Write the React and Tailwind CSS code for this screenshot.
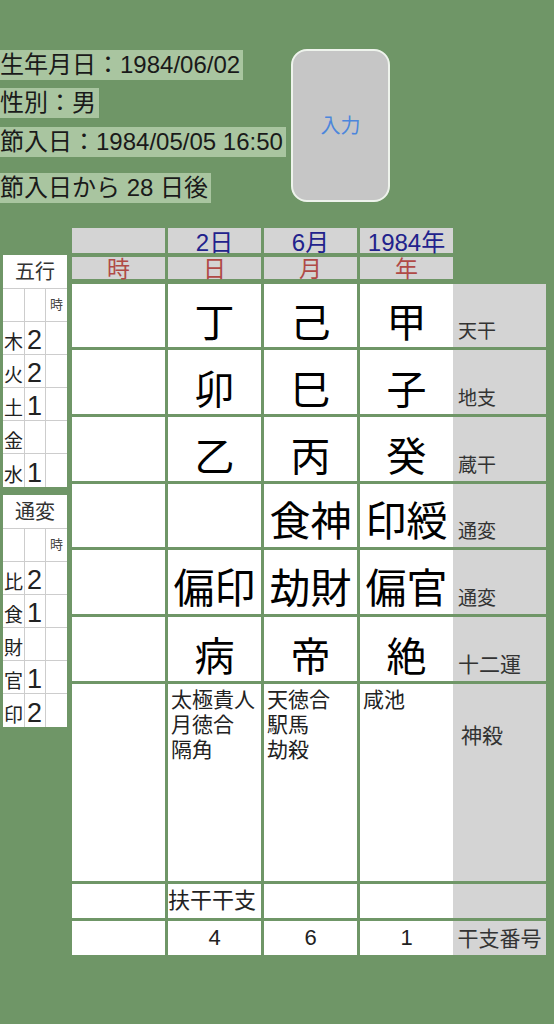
import React from 'react';

const FONT = { fontFamily: '"Liberation Sans", "Noto Sans CJK JP", sans-serif' };

const gogyo = [
  ['木', '2'],
  ['火', '2'],
  ['土', '1'],
  ['金', ''],
  ['水', '1'],
];

const tsuhen = [
  ['比', '2'],
  ['食', '1'],
  ['財', ''],
  ['官', '1'],
  ['印', '2'],
];

const mainRows = [
  { cells: ['丁', '己', '甲'], label: '天干', h: 'h-[63px]', size: 'text-[40px]', labelSize: 'text-[19px]' },
  { cells: ['卯', '巳', '子'], label: '地支', h: 'h-[64px]', size: 'text-[40px]', labelSize: 'text-[19px]' },
  { cells: ['乙', '丙', '癸'], label: '蔵干', h: 'h-[64px]', size: 'text-[40px]', labelSize: 'text-[19px]' },
  { cells: ['', '食神', '印綬'], label: '通変', h: 'h-[63px]', size: 'text-[41px]', labelSize: 'text-[19px]' },
  { cells: ['偏印', '劫財', '偏官'], label: '通変', h: 'h-[64px]', size: 'text-[41px]', labelSize: 'text-[19px]' },
  { cells: ['病', '帝', '絶'], label: '十二運', h: 'h-[64px]', size: 'text-[40px]', labelSize: 'text-[21px]' },
];

const CountBox = ({ title, items }) => {
  return (
    <div className="bg-white w-[64px] text-[#222]">
      <div className="h-[34px] flex items-center justify-center text-[20px] text-[#333] border-b border-[#cdcdcd]">
        {title}
      </div>
      <div className="flex h-[33px] border-b border-[#cdcdcd]">
        <div className="w-[22px] border-r border-[#cdcdcd]"></div>
        <div className="w-[21px] border-r border-[#cdcdcd]"></div>
        <div className="flex-1 flex items-center justify-center text-[13px] text-[#444]">時</div>
      </div>
      {items.map(([k, n], i) => (
        <div
          key={k}
          className={i < items.length - 1 ? 'flex h-[33px] border-b border-[#cdcdcd]' : 'flex h-[33px]'}
        >
          <div className="w-[22px] border-r border-[#cdcdcd] flex items-end justify-center pb-[2px] text-[19px] leading-none">
            {k}
          </div>
          <div className="w-[21px] border-r border-[#cdcdcd] flex items-end justify-start pl-[2px] text-[27px] leading-none">
            {n}
          </div>
          <div className="flex-1"></div>
        </div>
      ))}
    </div>
  );
};

const App = () => {
  return (
    <div className="w-full h-[1024px] bg-[#6f9667] overflow-hidden text-black" style={FONT}>
      {/* Top info */}
      <div className="flex pt-[49px]">
        <div className="w-[291px] pt-[1px] flex flex-col items-start text-[24px] text-[#1a1a1a]">
          <div className="h-[30px] leading-[30px] bg-[#a9c5a0] pr-[3px] whitespace-nowrap">生年月日：1984/06/02</div>
          <div className="h-[30px] leading-[30px] bg-[#a9c5a0] pr-[3px] mt-[8px] whitespace-nowrap">性別：男</div>
          <div className="h-[30px] leading-[30px] bg-[#a9c5a0] pr-[3px] mt-[9px] whitespace-nowrap">節入日：1984/05/05 16:50</div>
          <div className="h-[30px] leading-[30px] bg-[#a9c5a0] pr-[3px] mt-[16px] whitespace-nowrap">節入日から 28 日後</div>
        </div>
        <button className="w-[99px] h-[153px] rounded-[16px] bg-[#c6c6c6] border-2 border-[#eef3ec] flex items-center justify-center text-[20px] text-[#4c86dc]">
          入力
        </button>
      </div>

      {/* Chart */}
      <div className="flex mt-[25px]">
        {/* Left counters */}
        <div className="ml-[3px] mt-[27px] flex flex-col gap-[8px]">
          <CountBox title="五行" items={gogyo} />
          <CountBox title="通変" items={tsuhen} />
        </div>

        {/* Main table */}
        <div className="ml-[5px] w-[474px]">
          <div className="grid grid-cols-[93px_93px_93px_93px] gap-[3px]">
            <div className="h-[25px] bg-[#d4d4d4]"></div>
            {['2日', '6月', '1984年'].map((t) => (
              <div key={t} className="h-[25px] bg-[#d4d4d4] flex items-end justify-center text-[24px] leading-none text-[#22228c]">
                <span className="mb-[-2px]">{t}</span>
              </div>
            ))}
            {['時', '日', '月', '年'].map((t) => (
              <div key={t} className="h-[22px] mt-[1px] bg-[#d4d4d4] flex items-end justify-center text-[23px] leading-none text-[#b04a46]">
                <span className="mb-[-2px]">{t}</span>
              </div>
            ))}
          </div>

          <div className="mt-[5px] grid grid-cols-[93px_93px_93px_186px] gap-[3px]">
            {mainRows.map((row, ri) => (
              <React.Fragment key={ri}>
                <div className={`${row.h} bg-white`}></div>
                {row.cells.slice(0, 2).map((c, ci) => (
                  <div key={ci} className={`${row.h} bg-white flex items-end justify-center pb-[4px] leading-none ${row.size}`}>
                    {c}
                  </div>
                ))}
                <div className={`${row.h} flex`}>
                  <div className={`w-[93px] bg-white flex items-end justify-center pb-[4px] leading-none ${row.size}`}>
                    {row.cells[2]}
                  </div>
                  <div className={`flex-1 bg-[#d4d4d4] flex items-end pl-[5px] pb-[6px] leading-none text-[#333] ${row.labelSize}`}>
                    {row.label}
                  </div>
                </div>
              </React.Fragment>
            ))}

            {/* 神殺 */}
            <div className="h-[197px] bg-white"></div>
            <div className="h-[197px] bg-white pl-[3px] pt-[3px] text-[21px] leading-[25px] text-[#222]">
              <div>太極貴人</div>
              <div>月徳合</div>
              <div>隔角</div>
            </div>
            <div className="h-[197px] bg-white pl-[3px] pt-[3px] text-[21px] leading-[25px] text-[#222]">
              <div>天徳合</div>
              <div>駅馬</div>
              <div>劫殺</div>
            </div>
            <div className="h-[197px] flex">
              <div className="w-[93px] bg-white pl-[3px] pt-[3px] text-[21px] leading-[25px] text-[#222]">咸池</div>
              <div className="flex-1 bg-[#d4d4d4] pl-[8px] pt-[39px] text-[21px] leading-[25px] text-[#333]">神殺</div>
            </div>

            {/* 扶干干支 */}
            <div className="h-[34px] bg-white"></div>
            <div className="h-[34px] bg-white flex items-center text-[22px] leading-none text-[#222]">扶干干支</div>
            <div className="h-[34px] bg-white"></div>
            <div className="h-[34px] flex">
              <div className="w-[93px] bg-white"></div>
              <div className="flex-1 bg-[#d4d4d4]"></div>
            </div>

            {/* 干支番号 */}
            <div className="h-[34px] bg-white"></div>
            {['4', '6'].map((n) => (
              <div key={n} className="h-[34px] bg-white flex items-center justify-center text-[22px] leading-none text-[#222]">
                {n}
              </div>
            ))}
            <div className="h-[34px] flex">
              <div className="w-[93px] bg-white flex items-center justify-center text-[22px] leading-none text-[#222]">1</div>
              <div className="flex-1 bg-[#d4d4d4] flex items-center justify-center text-[21px] leading-none text-[#333] whitespace-nowrap">
                干支番号
              </div>
            </div>
          </div>
        </div>
      </div>
    </div>
  );
};

export default App;
